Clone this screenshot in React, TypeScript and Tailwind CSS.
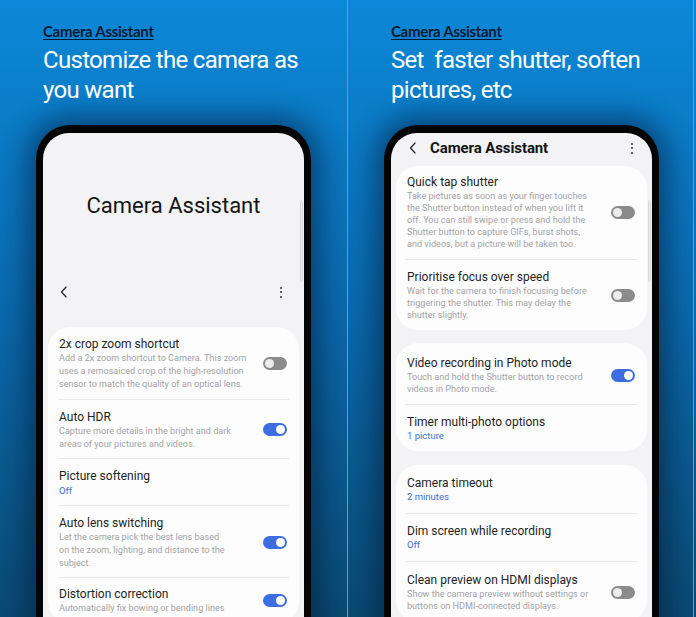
import React from "react";

type Item = {
  title: string;
  lines?: string[];
  value?: string;
  toggle?: "on" | "off";
  pt?: string;
  pb?: string;
};

function Toggle({ on }: { on: boolean }) {
  return (
    <div
      className={
        on
          ? "w-[24px] h-[13px] rounded-full bg-[#3d6de0] flex items-center justify-end px-[2px] shrink-0"
          : "w-[24px] h-[13px] rounded-full bg-[#8b8b8b] flex items-center justify-start px-[2px] shrink-0"
      }
    >
      <div className={on ? "w-[9px] h-[9px] rounded-full bg-white" : "w-[9px] h-[9px] rounded-full bg-[#ececec]"} />
    </div>
  );
}

function Chevron({ className }: { className: string }) {
  return (
    <svg viewBox="0 0 12 16" className={className} fill="none" stroke="#222" strokeWidth="1.4" strokeLinecap="round" strokeLinejoin="round">
      <path d="M8.5 2 L3 8 L8.5 14" />
    </svg>
  );
}

function Kebab() {
  return (
    <div className="flex flex-col items-center gap-[2.5px]">
      <div className="w-[2px] h-[2px] rounded-full bg-[#333]" />
      <div className="w-[2px] h-[2px] rounded-full bg-[#333]" />
      <div className="w-[2px] h-[2px] rounded-full bg-[#333]" />
    </div>
  );
}

function Card({ items, lh, className }: { items: Item[]; lh: string; className: string }) {
  return (
    <div className={"mx-[5px] rounded-[22px] bg-[#fdfdfd] " + className}>
      {items.map((it, i) => (
        <div key={it.title}>
          {i > 0 && <div className="mx-[10px] h-px bg-[#e8e8ea]" />}
          <div className={"flex items-center justify-between pl-[11px] pr-[12px] " + (it.pt ?? "pt-[9px]") + " " + (it.pb ?? "pb-[7.5px]")}>
            <div className="min-w-0">
              <div className="text-[12px] leading-[16px] text-[#1d1d1f] whitespace-nowrap">{it.title}</div>
              {it.value && (
                <div className={"text-[9.5px] text-[#3b6fd4] whitespace-nowrap " + lh}>{it.value}</div>
              )}
              {it.lines?.map((l) => (
                <div key={l} className={"text-[9.1px] text-[#a3a3a6] whitespace-nowrap " + lh}>
                  {l}
                </div>
              ))}
            </div>
            {it.toggle && <Toggle on={it.toggle === "on"} />}
          </div>
        </div>
      ))}
    </div>
  );
}

function Header({ lines }: { lines: string[] }) {
  return (
    <div className="pl-[43px] pt-[21px]">
      <div className="text-[15px] leading-[20px] font-bold text-[#0a1a33] underline underline-offset-[2px] decoration-[1px] tracking-[-0.3px] font-[Lato,'Open_Sans',sans-serif]">
        Camera Assistant
      </div>
      <div className="mt-[4px] text-[24px] leading-[30px] font-normal text-white tracking-[-0.7px] font-[Roboto,'Noto_Sans',sans-serif]">
        {lines.map((l) => (
          <div key={l} className="whitespace-pre">
            {l}
          </div>
        ))}
      </div>
    </div>
  );
}

function Scroller() {
  return <div className="absolute right-[1px] top-[67px] h-[82px] w-[3px] rounded-full border border-[#d4d4d6]" />;
}

function Phone({ children, ml }: { children: React.ReactNode; ml: string }) {
  return (
    <div className={"mt-[20px] w-[275px] rounded-t-[34px] bg-[#050505] pt-[8px] px-[7px] shadow-[0_0_26px_10px_rgba(0,15,40,0.45)] " + ml}>
      <div className="relative h-[520px] overflow-hidden rounded-t-[26px] bg-[#f3f3f5] font-[Roboto,'Noto_Sans',sans-serif]">
        {children}
      </div>
    </div>
  );
}

const leftItems: Item[] = [
  {
    title: "2x crop zoom shortcut",
    lines: [
      "Add a 2x zoom shortcut to Camera. This zoom",
      "uses a remosaiced crop of the high-resolution",
      "sensor to match the quality of an optical lens.",
    ],
    toggle: "off",
  },
  {
    title: "Auto HDR",
    lines: ["Capture more details in the bright and dark", "areas of your pictures and videos."],
    toggle: "on",
  },
  { title: "Picture softening", value: "Off" },
  {
    title: "Auto lens switching",
    lines: ["Let the camera pick the best lens based", "on the zoom, lighting, and distance to the", "subject."],
    toggle: "on",
  },
  {
    title: "Distortion correction",
    lines: ["Automatically fix bowing or bending lines"],
    toggle: "on",
    pt: "pt-[8px]",
  },
];

const card1: Item[] = [
  {
    title: "Quick tap shutter",
    lines: [
      "Take pictures as soon as your finger touches",
      "the Shutter button instead of when you lift it",
      "off. You can still swipe or press and hold the",
      "Shutter button to capture GIFs, burst shots,",
      "and videos, but a picture will be taken too.",
    ],
    toggle: "off",
    pt: "pt-[8px]",
    pb: "pb-[9px]",
  },
  {
    title: "Prioritise focus over speed",
    lines: ["Wait for the camera to finish focusing before", "triggering the shutter. This may delay the", "shutter slightly."],
    toggle: "off",
    pb: "pb-[9px]",
  },
];

const card2: Item[] = [
  {
    title: "Video recording in Photo mode",
    lines: ["Touch and hold the Shutter button to record", "videos in Photo mode."],
    toggle: "on",
    pt: "pt-[12px]",
    pb: "pb-[9px]",
  },
  { title: "Timer multi-photo options", value: "1 picture", pb: "pb-[9px]" },
];

const card3: Item[] = [
  { title: "Camera timeout", value: "2 minutes", pt: "pt-[10px]", pb: "pb-[10px]" },
  { title: "Dim screen while recording", value: "Off", pb: "pb-[10px]" },
  {
    title: "Clean preview on HDMI displays",
    lines: ["Show the camera preview without settings or", "buttons on HDMI-connected displays."],
    toggle: "off",
    pt: "pt-[10px]",
    pb: "pb-[10px]",
  },
];

export default function App() {
  return (
    <div className="flex w-[696px] h-[617px] overflow-hidden bg-gradient-to-b from-[#0b88d8] via-[#0a69ad] to-[#0a4a73]">
      <div className="w-[347px] h-full shrink-0 overflow-hidden">
        <Header lines={["Customize the camera as", "you want"]} />
        <Phone ml="ml-[36px]">
          <div className="h-[144px] flex items-center justify-center text-[22px] text-[#141414]">Camera Assistant</div>
          <div className="h-[30px] flex items-center justify-between pl-[16px] pr-[22px]">
            <Chevron className="w-[10px] h-[14px]" />
            <Kebab />
          </div>
          <div className="h-[20px]" />
          <Scroller />
          <Card items={leftItems} lh="leading-[13px]" className="" />
        </Phone>
      </div>
      <div className="w-px h-full bg-[#6c9bc2] shrink-0" />
      <div className="w-[345px] h-full shrink-0 overflow-hidden">
        <Header lines={["Set  faster shutter, soften", "pictures, etc"]} />
        <Phone ml="ml-[36px]">
          <div className="h-[30px] flex items-center pl-[17px] pr-[19px]">
            <Chevron className="w-[10px] h-[14px]" />
            <div className="ml-[12px] flex-1 text-[15px] font-bold text-[#141414] tracking-[-0.1px]">Camera Assistant</div>
            <Kebab />
          </div>
          <div className="h-[3px]" />
          <Scroller />
          <Card items={card1} lh="leading-[12px]" className="" />
          <Card items={card2} lh="leading-[12px]" className="mt-[13px]" />
          <Card items={card3} lh="leading-[12px]" className="mt-[14px]" />
        </Phone>
      </div>
      <div className="w-px h-full bg-[#6c9bc2] shrink-0" />
      <div className="flex-1" />
    </div>
  );
}
